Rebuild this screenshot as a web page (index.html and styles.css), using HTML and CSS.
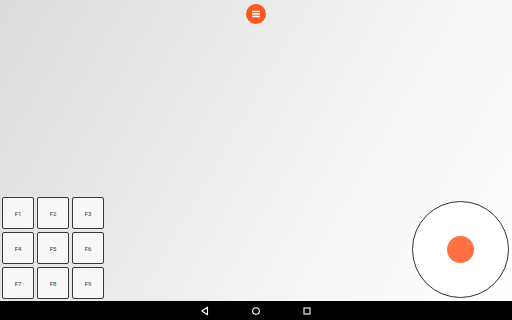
FILE: index.html
```html
<!DOCTYPE html>
<html>
<head>
<meta charset="utf-8">
<link rel="stylesheet" href="styles.css">
</head>
<body>
<div class="screen">
  <div class="stage">
    <div class="top">
      <button class="menu" aria-label="menu">
        <svg width="10" height="8" viewBox="0 0 10 8"><path d="M1 1.5h8M1 4h8M1 6.5h8" stroke="#fff" stroke-width="1.3" fill="none"/></svg>
      </button>
    </div>
    <div class="bottom">
      <div class="keys">
        <div class="key">F1</div><div class="key">F2</div><div class="key">F3</div>
        <div class="key">F4</div><div class="key">F5</div><div class="key">F6</div>
        <div class="key">F7</div><div class="key">F8</div><div class="key">F9</div>
      </div>
      <div class="joystick"><div class="knob"></div></div>
    </div>
  </div>
  <div class="navbar">
    <svg width="10" height="10" viewBox="0 0 10 10"><path d="M7.5 1.2v7.6L2 5z" stroke="#fff" stroke-width="1.1" fill="none" stroke-linejoin="round"/></svg>
    <svg width="10" height="10" viewBox="0 0 10 10"><circle cx="5" cy="5" r="3.3" stroke="#fff" stroke-width="1.1" fill="none"/></svg>
    <svg width="10" height="10" viewBox="0 0 10 10"><rect x="2" y="2" width="6" height="6" stroke="#fff" stroke-width="1.1" fill="none"/></svg>
  </div>
</div>
</body>
</html>
```
FILE: styles.css
```css
html, body {
  margin: 0;
  padding: 0;
  width: 512px;
  height: 320px;
  overflow: hidden;
  font-family: Roboto, "Liberation Sans", sans-serif;
}
.screen {
  width: 512px;
  height: 320px;
  display: flex;
  flex-direction: column;
}
.stage {
  flex: 1;
  display: flex;
  flex-direction: column;
  justify-content: space-between;
  background: linear-gradient(120deg, #dcdcdc 0%, #ebebeb 40%, #f6f6f6 70%, #ffffff 100%);
}
.top {
  display: flex;
  justify-content: center;
  padding-top: 4px;
}
.menu {
  width: 20px;
  height: 20px;
  border-radius: 50%;
  border: none;
  padding: 0;
  background: #ff5722;
  display: flex;
  align-items: center;
  justify-content: center;
}
.bottom {
  display: flex;
  justify-content: space-between;
  align-items: flex-end;
  padding: 0 3px 2px 2px;
}
.keys {
  display: grid;
  grid-template-columns: repeat(3, 32px);
  grid-auto-rows: 32px;
  gap: 3px;
}
.key {
  box-sizing: border-box;
  border: 1px solid #3a3a3a;
  border-radius: 2px;
  background: #f8f8f8;
  display: flex;
  align-items: center;
  justify-content: center;
  font-size: 6px;
  color: #333;
}
.joystick {
  box-sizing: border-box;
  width: 97px;
  height: 97px;
  margin-bottom: 1px;
  border: 1px solid #333;
  border-radius: 50%;
  background: #fff;
  display: flex;
  align-items: center;
  justify-content: center;
}
.knob {
  width: 27px;
  height: 27px;
  border-radius: 50%;
  background: #ff7043;
}
.navbar {
  height: 19px;
  background: #000;
  display: flex;
  justify-content: center;
  align-items: center;
  gap: 41px;
}
```
